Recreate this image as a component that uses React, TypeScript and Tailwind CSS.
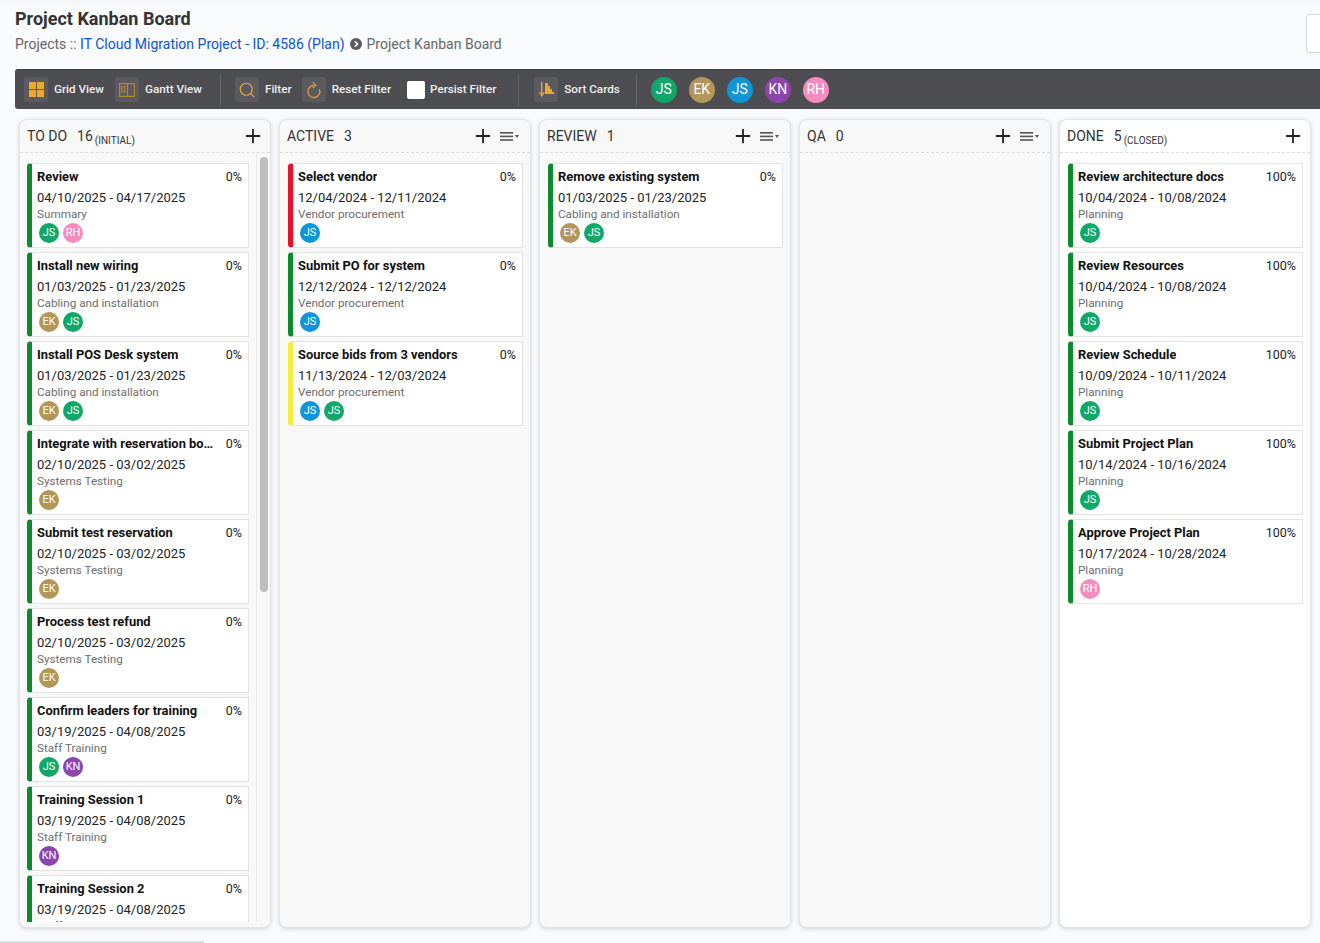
import * as React from "react";
import { Plus, Search } from "lucide-react";

type Who = "JS" | "EK" | "JB" | "KN" | "RH";

interface CardData {
  title: string;
  pct: string;
  dates: string;
  group: string;
  people: Who[];
  bar?: "green" | "red" | "yellow";
}

const avatarColor: Record<Who, string> = {
  JS: "bg-[#10a869]",
  EK: "bg-[#b39659]",
  JB: "bg-[#0f96d8]",
  KN: "bg-[#8e44ad]",
  RH: "bg-[#f48cc0]",
};

const avatarLabel = (w: Who) => (w === "JB" ? "JS" : w);

const todo: CardData[] = [
  { title: "Review", pct: "0%", dates: "04/10/2025 - 04/17/2025", group: "Summary", people: ["JS", "RH"] },
  { title: "Install new wiring", pct: "0%", dates: "01/03/2025 - 01/23/2025", group: "Cabling and installation", people: ["EK", "JS"] },
  { title: "Install POS Desk system", pct: "0%", dates: "01/03/2025 - 01/23/2025", group: "Cabling and installation", people: ["EK", "JS"] },
  { title: "Integrate with reservation board", pct: "0%", dates: "02/10/2025 - 03/02/2025", group: "Systems Testing", people: ["EK"] },
  { title: "Submit test reservation", pct: "0%", dates: "02/10/2025 - 03/02/2025", group: "Systems Testing", people: ["EK"] },
  { title: "Process test refund", pct: "0%", dates: "02/10/2025 - 03/02/2025", group: "Systems Testing", people: ["EK"] },
  { title: "Confirm leaders for training", pct: "0%", dates: "03/19/2025 - 04/08/2025", group: "Staff Training", people: ["JS", "KN"] },
  { title: "Training Session 1", pct: "0%", dates: "03/19/2025 - 04/08/2025", group: "Staff Training", people: ["KN"] },
  { title: "Training Session 2", pct: "0%", dates: "03/19/2025 - 04/08/2025", group: "Staff Training", people: ["KN"] },
];

const active: CardData[] = [
  { title: "Select vendor", pct: "0%", dates: "12/04/2024 - 12/11/2024", group: "Vendor procurement", people: ["JB"], bar: "red" },
  { title: "Submit PO for system", pct: "0%", dates: "12/12/2024 - 12/12/2024", group: "Vendor procurement", people: ["JB"] },
  { title: "Source bids from 3 vendors", pct: "0%", dates: "11/13/2024 - 12/03/2024", group: "Vendor procurement", people: ["JB", "JS"], bar: "yellow" },
];

const review: CardData[] = [
  { title: "Remove existing system", pct: "0%", dates: "01/03/2025 - 01/23/2025", group: "Cabling and installation", people: ["EK", "JS"] },
];

const done: CardData[] = [
  { title: "Review architecture docs", pct: "100%", dates: "10/04/2024 - 10/08/2024", group: "Planning", people: ["JS"] },
  { title: "Review Resources", pct: "100%", dates: "10/04/2024 - 10/08/2024", group: "Planning", people: ["JS"] },
  { title: "Review Schedule", pct: "100%", dates: "10/09/2024 - 10/11/2024", group: "Planning", people: ["JS"] },
  { title: "Submit Project Plan", pct: "100%", dates: "10/14/2024 - 10/16/2024", group: "Planning", people: ["JS"] },
  { title: "Approve Project Plan", pct: "100%", dates: "10/17/2024 - 10/28/2024", group: "Planning", people: ["RH"] },
];

function Card({ card }: { card: CardData }) {
  const barClass =
    card.bar === "red" ? "border-l-[#e8112d]" : card.bar === "yellow" ? "border-l-[#f7ee3c]" : "border-l-[#0c8a2e]";
  return (
    <div className={`h-[85px] shrink-0 bg-white border border-[#e2e3e5] border-l-[5px] rounded-l-[4px] pl-[5px] pr-[6px] pt-[5px] ${barClass}`}>
      <div className="flex justify-between gap-[10px] h-[16px] text-[12.900px] leading-[16px] text-[#111]">
        <span className="font-bold truncate">{card.title}</span>
        <span className="shrink-0 text-[#222] text-[12.5px]">{card.pct}</span>
      </div>
      <div className="mt-[5px] text-[13px] leading-[16px] text-[#222]">{card.dates}</div>
      <div className="mt-[1px] text-[11.7px] leading-[15px] text-[#6d6d6d]">{card.group}</div>
      <div className="mt-[1px] ml-[2px] flex gap-[4px]">
        {card.people.map((p, i) => (
          <span key={i} className={`w-[20px] h-[20px] rounded-full flex items-center justify-center text-white text-[11px] ${avatarColor[p]}`}>
            {avatarLabel(p)}
          </span>
        ))}
      </div>
    </div>
  );
}

function ListIcon() {
  return (
    <span className="flex items-center gap-[2px] text-[#555]">
      <svg width="13" height="9" viewBox="0 0 13 9" fill="currentColor">
        <rect width="13" height="1.6" />
        <rect y="3.6" width="13" height="1.6" />
        <rect y="7.2" width="13" height="1.6" />
      </svg>
      <svg width="4" height="3" viewBox="0 0 4 3" fill="currentColor">
        <path d="M0 0h4L2 3z" />
      </svg>
    </span>
  );
}

function Column({
  name,
  count,
  note,
  cards,
  menu,
  white,
  scroll,
}: {
  name: string;
  count: number;
  note?: string;
  cards: CardData[];
  menu?: boolean;
  white?: boolean;
  scroll?: boolean;
}) {
  return (
    <div className={`w-[252px] shrink-0 h-[809px] flex flex-col rounded-[8px] border border-[#e2e4e6] shadow-[0_1px_4px_rgba(0,0,0,0.16)] ${white ? "bg-white" : "bg-[#f8f8f8]"}`}>
      <div className={`h-[33px] shrink-0 flex items-center pl-[7px] border-b border-dashed border-[#dcdcdc] text-[#333] ${menu ? "pr-[11px]" : "pr-[6px]"}`}>
        <span className="text-[14px]">{name}</span>
        <span className="ml-[10px] text-[14px]">{count}</span>
        {note && <span className="ml-[2px] mt-[8px] text-[10px]">{note}</span>}
        <span className="ml-auto flex items-center gap-[6px]">
          <Plus size={22} strokeWidth={2} className="text-[#222]" />
          {menu && <ListIcon />}
        </span>
      </div>
      <div className="flex-1 min-h-0 flex">
        <div className={`flex-1 min-w-0 mb-[5px] overflow-hidden flex flex-col gap-[4px] pt-[10px] ${scroll ? "pl-[7px] pr-[7px]" : "pl-[8px] pr-[7px]"}`}>
          {cards.map((c) => (
            <Card key={c.title} card={c} />
          ))}
        </div>
        {scroll && (
          <div className="w-[14px] shrink-0 mb-[5px] border-l border-[#e8e8e8] pl-[3px] pt-[4px]">
            <div className="w-[8px] h-[435px] rounded-full bg-[#bdbdbd]" />
          </div>
        )}
      </div>
    </div>
  );
}

function ToolButton({ icon, label }: { icon: React.ReactNode; label: string }) {
  return (
    <div className="flex items-center gap-[6px]">
      <span className="w-[24px] h-[25px] rounded-[3px] bg-[#5b5b5f] flex items-center justify-center">{icon}</span>
      <span className="text-[11.7px] font-medium text-[#eeeeee] whitespace-nowrap">{label}</span>
    </div>
  );
}

function Divider() {
  return <span className="w-px h-[32px] bg-[#66666a]" />;
}

export default function App() {
  return (
    <div className="w-[1320px] h-[943px] overflow-hidden bg-[#f9fafc] font-['Roboto',sans-serif] flex flex-col">
      <div className="h-[4px] shrink-0 bg-[#f5f6f7]" />
      <div className="h-[65px] shrink-0 flex justify-between pl-[15px]">
        <div>
          <h1 className="mt-[4px] text-[18px] leading-[22px] font-bold text-[#333]">Project Kanban Board</h1>
          <p className="mt-[4px] text-[14px] leading-[20px] text-[#666] whitespace-nowrap flex items-center">
            <span>Projects ::&nbsp;</span>
            <span className="text-[#0b57c4]">IT Cloud Migration Project - ID: 4586 (Plan)</span>
            <svg className="mx-[5px]" width="12" height="12" viewBox="0 0 12 12">
              <circle cx="6" cy="6" r="6" fill="#5c5c5c" />
              <path d="M4.8 3.2 7.6 6 4.8 8.8" fill="none" stroke="#fff" strokeWidth="1.6" />
            </svg>
            <span>Project Kanban Board</span>
          </p>
        </div>
        <div className="mt-[10px] w-[14px] h-[39px] bg-white border border-r-0 border-[#d8d8d8] rounded-l-[4px]" />
      </div>
      <div className="ml-[15px] h-[40px] shrink-0 bg-[#4e4e52] border-t border-[#3c3c40] rounded-l-[3px] flex items-center pl-[9px]">
        <ToolButton
          label="Grid View"
          icon={
            <svg width="15" height="15" viewBox="0 0 15 15" fill="#f5a623">
              <rect width="7" height="7" />
              <rect x="8" width="7" height="7" />
              <rect y="8" width="7" height="7" />
              <rect x="8" y="8" width="7" height="7" />
            </svg>
          }
        />
        <span className="w-[11px]" />
        <ToolButton
          label="Gantt View"
          icon={
            <svg width="16" height="14" viewBox="0 0 16 14" fill="none" stroke="#b9852f" strokeWidth="1.2">
              <rect x="0.6" y="0.6" width="14.800" height="12.800" />
              <path d="M8.500 0.600v12.800M2.800 3.500h3v5.500h-3z" />
            </svg>
          }
        />
        <span className="w-[18px]" />
        <Divider />
        <span className="w-[14px]" />
        <ToolButton label="Filter" icon={<Search size={18} strokeWidth={1.6} className="text-[#e8a33d]" />} />
        <span className="w-[10px]" />
        <ToolButton
          label="Reset Filter"
          icon={
            <svg width="16" height="18" viewBox="0 0 16 18" fill="none" stroke="#d4983a" strokeWidth="1.4">
              <path d="M8 4.500A6 6 0 1 0 13.300 8" />
              <path d="M6.800 1.500 9.800 4.500 6.800 7" strokeLinejoin="round" />
            </svg>
          }
        />
        <span className="w-[16px]" />
        <span className="w-[18px] h-[18px] bg-white rounded-[2px]" />
        <span className="ml-[5px] mt-[1px] text-[11.7px] font-medium text-[#eeeeee] whitespace-nowrap">Persist Filter</span>
        <span className="w-[22px]" />
        <Divider />
        <span className="w-[15px]" />
        <ToolButton
          label="Sort Cards"
          icon={
            <svg width="15" height="15" viewBox="0 0 15 15" fill="#e8a33d">
              <path d="M2 0h1.400v11.500l1.600-1.800.9.8L2.700 15 0 10.500l.9-.8L2 11.500z" />
              <path d="M6 1h3v3h2v3h2v3h2v2H6z" />
            </svg>
          }
        />
        <span className="w-[16px]" />
        <Divider />
        <span className="w-[14px]" />
        <div className="flex gap-[12px]">
          {(["JS", "EK", "JB", "KN", "RH"] as Who[]).map((p) => (
            <span key={p} className={`w-[26px] h-[26px] rounded-full flex items-center justify-center text-white text-[14px] ${avatarColor[p]}`}>
              {avatarLabel(p)}
            </span>
          ))}
        </div>
      </div>
      <div className="mt-[10px] pl-[19px] flex gap-[8px]">
        <Column name="TO DO" count={16} note="(INITIAL)" cards={todo} scroll />
        <Column name="ACTIVE" count={3} cards={active} menu />
        <Column name="REVIEW" count={1} cards={review} menu />
        <Column name="QA" count={0} cards={[]} menu />
        <Column name="DONE" count={5} note="(CLOSED)" cards={done} white />
      </div>
      <div className="mt-auto h-[2px] w-[204px] bg-[#dddddd]" />
    </div>
  );
}
